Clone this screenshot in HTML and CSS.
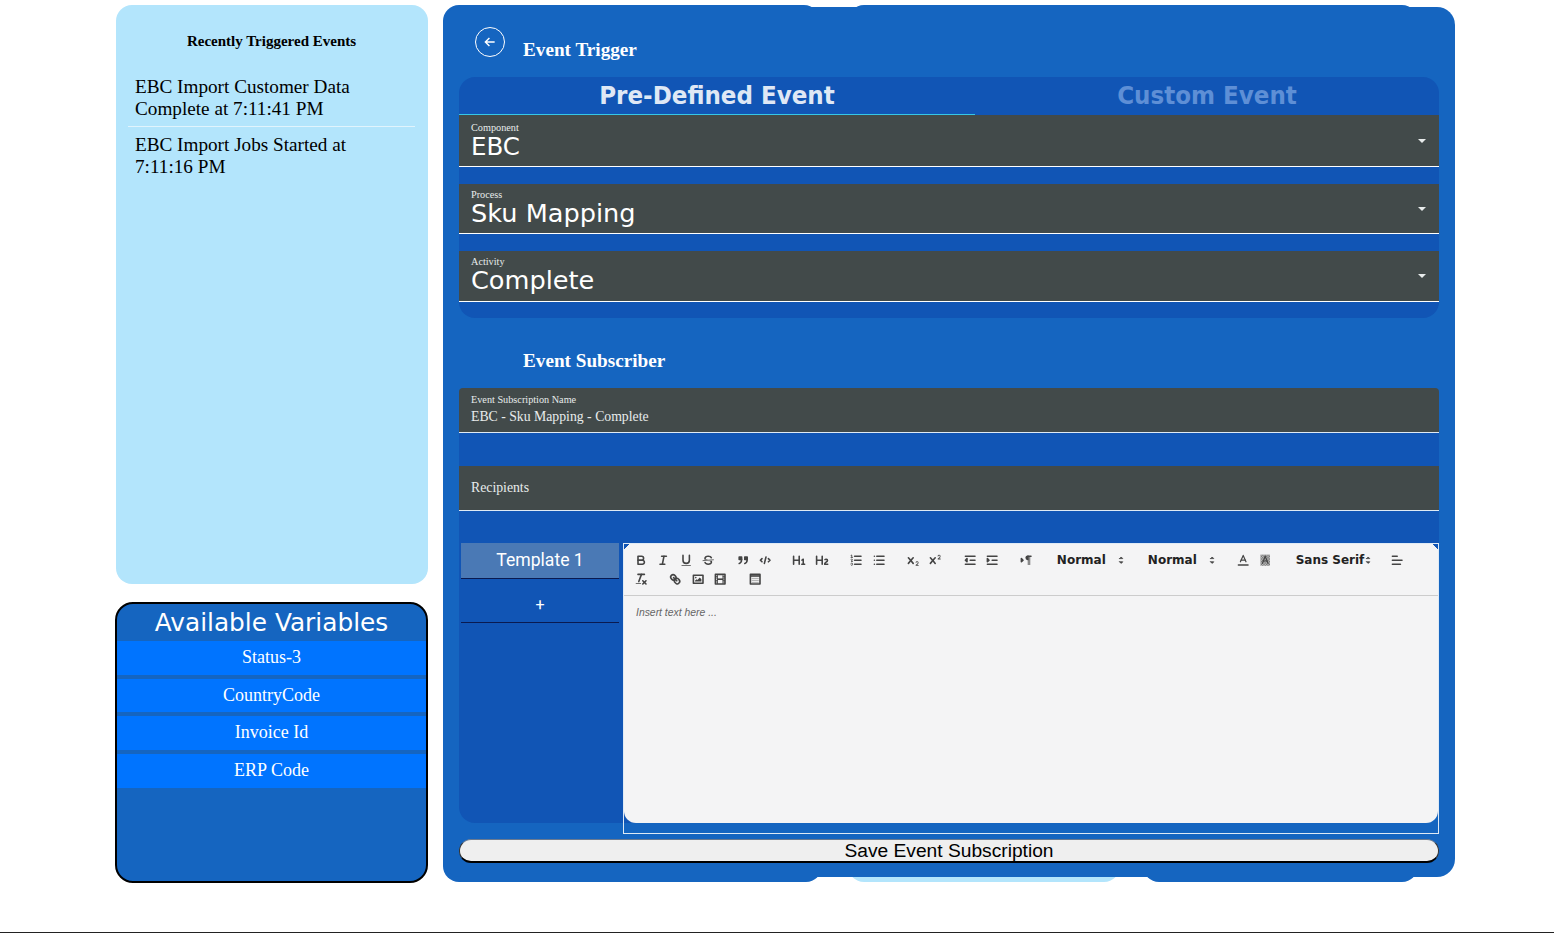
FILE: index.html
```html
<!DOCTYPE html>
<html lang="en">
<head>
    <meta charset="UTF-8">
    <meta name="viewport" content="width=device-width, initial-scale=1.0">
    <title>Event Subscription</title>
    <link rel="stylesheet" href="styles.css">
</head>
<body>
<div class="page">
    <div class="side">
        <div class="recent">
            <h4 class="recent-title">Recently Triggered Events</h4>
            <div class="recent-item">EBC Import Customer Data Complete at 7:11:41 PM</div>
            <div class="recent-item">EBC Import Jobs Started at 7:11:16 PM</div>
        </div>
        <div class="variables">
            <div class="variables-title">Available Variables</div>
            <div class="variable">Status-3</div>
            <div class="variable">CountryCode</div>
            <div class="variable">Invoice Id</div>
            <div class="variable">ERP Code</div>
        </div>
    </div>

    <div class="main">
        <!-- stacked panels that peek out behind the main one -->
        <div class="peek peek-top-left"></div>
        <div class="peek peek-top-right"></div>
        <div class="peek peek-bottom-left"></div>
        <div class="peek peek-bottom-mid"></div>
        <div class="peek peek-bottom-right"></div>

        <div class="trigger-head">
            <span class="back-btn">
                <svg viewBox="0 0 24 24" width="14" height="14"><path d="M20 12H5M11 5l-7 7 7 7" fill="none" stroke="#fff" stroke-width="2.4"/></svg>
            </span>
            <h3 class="heading">Event Trigger</h3>
        </div>

        <div class="band">
            <div class="tabs">
                <div class="tab active">Pre-Defined Event</div>
                <div class="tab">Custom Event</div>
            </div>
            <div class="select select-1">
                <div class="field-label">Component</div>
                <div class="select-value">EBC</div>
                <span class="caret"></span>
            </div>
            <div class="select select-2">
                <div class="field-label">Process</div>
                <div class="select-value">Sku Mapping</div>
                <span class="caret"></span>
            </div>
            <div class="select select-3">
                <div class="field-label">Activity</div>
                <div class="select-value">Complete</div>
                <span class="caret"></span>
            </div>
        </div>

        <h3 class="heading subscriber-heading">Event Subscriber</h3>

        <div class="band subscriber">
            <div class="text-field">
                <div class="field-label">Event Subscription Name</div>
                <div class="text-value">EBC - Sku Mapping - Complete</div>
            </div>
            <div class="text-field recipients">
                <div class="text-value">Recipients</div>
            </div>

            <div class="templates">
                <div class="template-tabs">
                    <div class="template-tab active">Template 1</div>
                    <div class="template-tab add">+</div>
                </div>
                <div class="editor-wrap">
                    <div class="editor">
                        <div class="toolbar">
                            <span class="group">
                                <span class="btn"><svg viewBox="0 0 18 18"><path class="st" d="M5,4H9.5A2.5,2.5,0,0,1,12,6.5v0A2.5,2.5,0,0,1,9.5,9H5A0,0,0,0,1,5,9V4A0,0,0,0,1,5,4Z"/><path class="st" d="M5,9h5.5A2.5,2.5,0,0,1,13,11.5v0A2.5,2.5,0,0,1,10.5,14H5a0,0,0,0,1,0,0V9A0,0,0,0,1,5,9Z"/></svg></span>
                                <span class="btn"><svg viewBox="0 0 18 18"><line class="st" x1="7" x2="13" y1="4" y2="4"/><line class="st" x1="5" x2="11" y1="14" y2="14"/><line class="st" x1="8" x2="10" y1="14" y2="4"/></svg></span>
                                <span class="btn"><svg viewBox="0 0 18 18"><path class="st" d="M5,3V9a4.012,4.012,0,0,0,4,4H9a4.012,4.012,0,0,0,4-4V3"/><rect class="fl" height="1" rx="0.5" ry="0.5" width="12" x="3" y="15"/></svg></span>
                                <span class="btn"><svg viewBox="0 0 18 18"><line class="st thin" x1="15.5" x2="2.5" y1="8.5" y2="9.5"/><path class="fl" d="M9.007,8C6.542,7.791,6,7.519,6,6.5,6,5.792,7.283,5,9,5c1.571,0,2.765.679,2.969,1.309a1,1,0,0,0,1.9-.617C13.356,4.106,11.354,3,9,3,6.2,3,4,4.538,4,6.5a3.2,3.2,0,0,0,.5,1.843Z"/><path class="fl" d="M8.984,10C11.457,10.208,12,10.48,12,11.5c0,.708-1.283,1.5-3,1.5-1.571,0-2.765-.679-2.969-1.309a1,1,0,1,0-1.9.617C4.644,13.894,6.646,15,9,15c2.8,0,5-1.538,5-3.5a3.2,3.2,0,0,0-.5-1.843Z"/></svg></span>
                            </span>
                            <span class="group">
                                <span class="btn"><svg viewBox="0 0 18 18"><rect class="fl st" height="3" width="3" x="4" y="5"/><rect class="fl st" height="3" width="3" x="11" y="5"/><path class="st" d="M7,8c0,4.031-3,5-3,5"/><path class="st" d="M14,8c0,4.031-3,5-3,5"/></svg></span>
                                <span class="btn"><svg viewBox="0 0 18 18"><polyline class="st" points="5 7 3 9 5 11"/><polyline class="st" points="13 7 15 9 13 11"/><line class="st" x1="10" x2="8" y1="5" y2="13"/></svg></span>
                            </span>
                            <span class="group">
                                <span class="btn"><svg viewBox="0 0 18 18"><path class="fl" d="M10,4V14a1,1,0,0,1-2,0V10H3v4a1,1,0,0,1-2,0V4A1,1,0,0,1,3,4V8H8V4a1,1,0,0,1,2,0Zm6.06787,9.209H14.98975V7.59863a.54085.54085,0,0,0-.605-.60547h-.62744a1.01119,1.01119,0,0,0-.748.29688L11.645,8.56641a.5435.5435,0,0,0-.022.8584l.28613.30762a.53861.53861,0,0,0,.84717.0332l.09912-.08789a1.2137,1.2137,0,0,0,.2417-.35254h.02246s-.01123.30859-.01123.60547V13.209H12.041a.54085.54085,0,0,0-.605.60547v.43945a.54085.54085,0,0,0,.605.60547h4.02686a.54085.54085,0,0,0,.605-.60547v-.43945A.54085.54085,0,0,0,16.06787,13.209Z"/></svg></span>
                                <span class="btn"><svg viewBox="0 0 18 18"><path class="fl" d="M16.73975,13.81445v.43945a.54085.54085,0,0,1-.605.60547H11.855a.58392.58392,0,0,1-.64893-.60547V14.0127c0-2.90527,3.39941-3.42187,3.39941-4.55469a.77675.77675,0,0,0-.84717-.78125,1.17684,1.17684,0,0,0-.83594.38477c-.2749.26367-.561.374-.85791.13184l-.4292-.34082c-.30811-.24219-.38525-.51758-.1543-.81445a2.97155,2.97155,0,0,1,2.45361-1.17676,2.45393,2.45393,0,0,1,2.68408,2.40918c0,2.45312-3.1792,2.92676-3.27832,3.93848h2.79443A.54085.54085,0,0,1,16.73975,13.81445ZM9,3A.99974.99974,0,0,0,8,4V8H3V4A1,1,0,0,0,1,4V14a1,1,0,0,0,2,0V10H8v4a1,1,0,0,0,2,0V4A.99974.99974,0,0,0,9,3Z"/></svg></span>
                            </span>
                            <span class="group">
                                <span class="btn"><svg viewBox="0 0 18 18"><line class="st" x1="7" x2="15" y1="4" y2="4"/><line class="st" x1="7" x2="15" y1="9" y2="9"/><line class="st" x1="7" x2="15" y1="14" y2="14"/><line class="st thin" x1="2.5" x2="4.5" y1="5.5" y2="5.5"/><path class="fl" d="M3.5,6A0.5,0.5,0,0,1,3,5.5V3.085l-0.276.138A0.5,0.5,0,0,1,2.053,3c-0.124-.247-0.023-0.324.224-0.447l1-.5A0.5,0.5,0,0,1,4,2.5v3A0.5,0.5,0,0,1,3.5,6Z"/><path class="st thin" d="M4.5,10.5h-2c0-.234,1.85-1.076,1.85-2.234A0.959,0.959,0,0,0,2.5,8.156"/><path class="st thin" d="M2.5,14.846a0.959,0.959,0,0,0,1.85-.109A0.7,0.7,0,0,0,3.75,14a0.688,0.688,0,0,0,.6-0.736,0.959,0.959,0,0,0-1.85-.109"/></svg></span>
                                <span class="btn"><svg viewBox="0 0 18 18"><line class="st" x1="6" x2="15" y1="4" y2="4"/><line class="st" x1="6" x2="15" y1="9" y2="9"/><line class="st" x1="6" x2="15" y1="14" y2="14"/><line class="st" x1="3" x2="3" y1="4" y2="4"/><line class="st" x1="3" x2="3" y1="9" y2="9"/><line class="st" x1="3" x2="3" y1="14" y2="14"/></svg></span>
                            </span>
                            <span class="group">
                                <span class="btn"><svg viewBox="0 0 18 18"><path class="fl" d="M15.5,15H13.861a3.858,3.858,0,0,0,1.914-2.975,1.8,1.8,0,0,0-1.6-1.751A1.921,1.921,0,0,0,12.021,11.7a0.50013,0.50013,0,1,0,.957.291h0a0.914,0.914,0,0,1,1.053-.725,0.81,0.81,0,0,1,.744.762c0,1.076-1.16971,1.86982-1.93971,2.43082A1.45639,1.45639,0,0,0,12,15.5a0.5,0.5,0,0,0,.5.5h3A0.5,0.5,0,0,0,15.5,15Z"/><path class="fl" d="M9.65,5.241a1,1,0,0,0-1.409.108L6,7.964,3.759,5.349A1,1,0,0,0,2.192,6.59178Q2.21541,6.6213,2.241,6.651L4.684,9.5,2.241,12.35A1,1,0,0,0,3.71,13.70722q0.02557-.02768.049-0.05722L6,11.036,8.241,13.65a1,1,0,1,0,1.567-1.24277Q9.78459,12.3777,9.759,12.35L7.316,9.5,9.759,6.651A1,1,0,0,0,9.65,5.241Z"/></svg></span>
                                <span class="btn"><svg viewBox="0 0 18 18"><path class="fl" d="M15.5,7H13.861a4.015,4.015,0,0,0,1.914-2.975,1.8,1.8,0,0,0-1.6-1.751A1.922,1.922,0,0,0,12.021,3.7a0.5,0.5,0,1,0,.957.291,0.917,0.917,0,0,1,1.053-.725,0.81,0.81,0,0,1,.744.762c0,1.077-1.164,1.925-1.934,2.486A1.423,1.423,0,0,0,12,7.5a0.5,0.5,0,0,0,.5.5h3A0.5,0.5,0,0,0,15.5,7Z"/><path class="fl" d="M9.651,5.241a1,1,0,0,0-1.41.108L6,7.964,3.759,5.349a1,1,0,1,0-1.519,1.3L4.683,9.5,2.241,12.35a1,1,0,1,0,1.519,1.3L6,11.036l2.241,2.616a1,1,0,0,0,1.519-1.3L7.317,9.5,9.759,6.651A1,1,0,0,0,9.651,5.241Z"/></svg></span>
                            </span>
                            <span class="group">
                                <span class="btn"><svg viewBox="0 0 18 18"><line class="st" x1="3" x2="15" y1="14" y2="14"/><line class="st" x1="3" x2="15" y1="4" y2="4"/><line class="st" x1="9" x2="15" y1="9" y2="9"/><polyline class="fl st" points="5 7 5 11 3 9 5 7"/></svg></span>
                                <span class="btn"><svg viewBox="0 0 18 18"><line class="st" x1="3" x2="15" y1="14" y2="14"/><line class="st" x1="3" x2="15" y1="4" y2="4"/><line class="st" x1="9" x2="15" y1="9" y2="9"/><polyline class="fl st" points="3 7 3 11 5 9 3 7"/></svg></span>
                            </span>
                            <span class="group">
                                <span class="btn"><svg viewBox="0 0 18 18"><polygon class="fl st" points="3 11 5 9 3 7 3 11"/><line class="st" x1="15" x2="11" y1="4" y2="4"/><path class="fl" d="M11,3a3,3,0,0,0,0,6h1V3H11Z"/><rect class="fl" height="11" width="1" x="11" y="4"/><rect class="fl" height="11" width="1" x="13" y="4"/></svg></span>
                            </span>
                            <span class="group">
                                <span class="picker">Normal<svg viewBox="0 0 18 18"><polygon class="st thin fl" points="7 11 9 13 11 11 7 11"/><polygon class="st thin fl" points="7 7 9 5 11 7 7 7"/></svg></span>
                            </span>
                            <span class="group">
                                <span class="picker">Normal<svg viewBox="0 0 18 18"><polygon class="st thin fl" points="7 11 9 13 11 11 7 11"/><polygon class="st thin fl" points="7 7 9 5 11 7 7 7"/></svg></span>
                            </span>
                            <span class="group">
                                <span class="btn"><svg viewBox="0 0 18 18"><line class="st" x1="3" x2="15" y1="15" y2="15"/><polyline class="st semi" points="5.5 11 9 3 12.5 11"/><line class="st semi" x1="11.63" x2="6.38" y1="9" y2="9"/></svg></span>
                                <span class="btn"><svg viewBox="0 0 18 18"><defs><pattern id="hatch" width="2" height="2" patternUnits="userSpaceOnUse"><rect width="2" height="2" fill="#ccc"/><rect width="1" height="1" fill="#666"/><rect x="1" y="1" width="1" height="1" fill="#666"/></pattern></defs><rect x="3" y="2" width="12" height="14" fill="url(#hatch)"/><polyline class="st semi" points="5.5 13 9 4 12.5 13"/><line class="st semi" x1="11.63" x2="6.38" y1="10" y2="10"/></svg></span>
                            </span>
                            <span class="group">
                                <span class="picker font">Sans Serif<svg viewBox="0 0 18 18"><polygon class="st thin fl" points="7 11 9 13 11 11 7 11"/><polygon class="st thin fl" points="7 7 9 5 11 7 7 7"/></svg></span>
                            </span>
                            <span class="group">
                                <span class="btn"><svg viewBox="0 0 18 18"><line class="st" x1="3" x2="15" y1="9" y2="9"/><line class="st" x1="3" x2="13" y1="14" y2="14"/><line class="st" x1="3" x2="9" y1="4" y2="4"/></svg></span>
                            </span>
                            <span class="group">
                                <span class="btn"><svg viewBox="0 0 18 18"><line class="st" x1="5" x2="13" y1="3" y2="3"/><line class="st" x1="6" x2="9.35" y1="12" y2="3"/><line class="st" x1="11" x2="15" y1="11" y2="15"/><line class="st" x1="15" x2="11" y1="11" y2="15"/><rect class="fl" height="1" rx="0.5" ry="0.5" width="7" x="2" y="14"/></svg></span>
                            </span>
                            <span class="group">
                                <span class="btn"><svg viewBox="0 0 18 18"><line class="st" x1="7" x2="11" y1="7" y2="11"/><path class="st" d="M8.9,4.577a3.476,3.476,0,0,1,.36,4.679A3.476,3.476,0,0,1,4.577,8.9C3.185,7.5,2.035,6.4,4.217,4.217S7.5,3.185,8.9,4.577Z"/><path class="st" d="M13.423,9.1a3.476,3.476,0,0,0-4.679-.36,3.476,3.476,0,0,0,.36,4.679c1.392,1.392,2.5,2.542,4.679.36S14.815,10.5,13.423,9.1Z"/></svg></span>
                                <span class="btn"><svg viewBox="0 0 18 18"><rect class="st" height="10" width="12" x="3" y="4"/><circle class="fl" cx="6" cy="7" r="1"/><polyline class="fl" points="5 12 5 11 7 9 8 10 11 7 13 9 13 12 5 12"/></svg></span>
                                <span class="btn"><svg viewBox="0 0 18 18"><rect class="st" height="12" width="12" x="3" y="3"/><rect class="fl" height="12" width="1" x="5" y="3"/><rect class="fl" height="12" width="1" x="12" y="3"/><rect class="fl" height="2" width="8" x="5" y="8"/><rect class="fl" height="1" width="3" x="3" y="5"/><rect class="fl" height="1" width="3" x="3" y="7"/><rect class="fl" height="1" width="3" x="3" y="10"/><rect class="fl" height="1" width="3" x="3" y="12"/><rect class="fl" height="1" width="3" x="12" y="5"/><rect class="fl" height="1" width="3" x="12" y="7"/><rect class="fl" height="1" width="3" x="12" y="10"/><rect class="fl" height="1" width="3" x="12" y="12"/></svg></span>
                            </span>
                            <span class="group">
                                <span class="btn"><svg viewBox="0 0 18 18"><rect class="st" height="12" width="12" x="3" y="3"/><rect class="fl" height="2" width="12" x="3" y="4"/><line class="st rows" x1="5" x2="13" y1="8" y2="8"/><line class="st rows" x1="5" x2="13" y1="10.5" y2="10.5"/><line class="st rows" x1="5" x2="13" y1="13" y2="13"/></svg></span>
                            </span>
                        </div>
                        <div class="editor-body">Insert text here ...</div>
                    </div>
                </div>
            </div>
        </div>

        <button class="save-btn">Save Event Subscription</button>
    </div>
</div>
</body>
</html>
```

FILE: styles.css
```css
body {
    margin: 0;
    padding: 0;
    background-color: #fff;
    font-family: "Liberation Serif", serif;
}
.page {
    box-sizing: border-box;
    height: 933px;
    padding: 5px 0 0 116px;
    display: flex;
    gap: 15px;
    overflow: hidden;
    border-bottom: 1px solid #222;
}

/* left column */
.side {
    width: 312px;
}
.recent {
    box-sizing: border-box;
    width: 312px;
    height: 579px;
    padding: 28px 13px 0 12px;
    background-color: #b3e5fc;
    border-radius: 16px;
}
.recent-title {
    margin: 0 0 26px;
    font-size: 15px;
    line-height: 17px;
    text-align: center;
}
.recent-item {
    padding: 0 20px 6px 7px;
    margin-bottom: 7px;
    font-size: 19.2px;
    line-height: 22px;
    border-bottom: 1px solid #e1f4fd;
}
.recent-item:last-child {
    border-bottom: none;
}
.variables {
    box-sizing: border-box;
    width: 313px;
    height: 281px;
    margin: 18px 0 0 -1px;
    background-color: #1565c0;
    border: 2px solid #000;
    border-radius: 18px;
    overflow: hidden;
}
.variables-title {
    height: 37px;
    color: #fff;
    font-family: "DejaVu Sans", sans-serif;
    font-size: 24.8px;
    line-height: 37px;
    text-align: center;
}
.variable {
    height: 33.67px;
    margin-bottom: 4px;
    background-color: #0074ff;
    color: #fff;
    font-size: 18px;
    line-height: 33px;
    text-align: center;
}

/* main panel */
.main {
    box-sizing: border-box;
    position: relative;
    width: 1012px;
    height: 870px;
    margin-top: 2px;
    padding: 0 16px;
    background-color: #1565c0;
    border-radius: 18px;
}
.peek {
    position: absolute;
    background-color: #1565c0;
    height: 40px;
    z-index: -1;
    border-radius: 16px;
}
.peek-top-left { left: 0; top: -2px; width: 377px; }
.peek-top-right { left: 405px; top: -2px; width: 570px; }
.peek-bottom-left { left: 0; bottom: -5px; width: 379px; }
.peek-bottom-mid { left: 405px; bottom: -5px; width: 272px; background-color: #b3e5fc; }
.peek-bottom-right { left: 700px; bottom: -5px; width: 275px; }

.trigger-head {
    height: 70px;
    display: flex;
    padding-left: 16px;
}
.back-btn {
    box-sizing: border-box;
    width: 30px;
    height: 30px;
    margin-top: 20px;
    display: flex;
    align-items: center;
    justify-content: center;
    border: 1px solid #fff;
    border-radius: 50%;
}
.heading {
    margin: 32px 0 0 18px;
    color: #fff;
    font-size: 19.2px;
    line-height: 21px;
    font-weight: bold;
}
.subscriber-heading {
    margin: 32px 0 17px 64px;
}
.band {
    background-color: #1155b5;
    border-radius: 16px;
    height: 241px;
}
.tabs {
    height: 38px;
    display: flex;
}
.tab {
    box-sizing: border-box;
    width: 516px;
    font-family: "DejaVu Sans Condensed", "DejaVu Sans", sans-serif;
    font-stretch: condensed;
    font-weight: bold;
    font-size: 25.6px;
    line-height: 37px;
    text-align: center;
    color: #5e8fd6;
}
.tab:last-child {
    width: 464px;
}
.tab.active {
    color: #dfe8f5;
    border-bottom: 1px solid #35c6e6;
}
.select {
    box-sizing: border-box;
    position: relative;
    height: 51px;
    margin-bottom: 17px;
    padding: 5px 12px 0;
    background-color: #424a4a;
    border-bottom: 1px solid #fff;
    color: #fff;
}
.select-1 { height: 52px; padding-top: 7px; }
.select-1 .select-value { font-size: 24.5px; line-height: 28px; }
.select-2 { height: 50px; }
.field-label {
    font-size: 10.24px;
    line-height: 11px;
    color: #e8ecec;
}
.select-value {
    font-family: "DejaVu Sans", sans-serif;
    font-size: 25.6px;
    line-height: 26px;
}
.caret {
    position: absolute;
    right: 13px;
    top: 50%;
    margin-top: -2px;
    border-left: 4px solid transparent;
    border-right: 4px solid transparent;
    border-top: 4px solid #e8ecec;
}

/* subscriber section */
.subscriber {
    height: 435px;
}
.text-field {
    box-sizing: border-box;
    height: 45px;
    padding: 6px 12px 0;
    margin-bottom: 33px;
    background-color: #424a4a;
    border-bottom: 1px solid #dfeaf5;
    border-radius: 4px 4px 0 0;
    color: #e8ecec;
}
.text-value {
    margin-top: 4px;
    font-size: 13.75px;
    line-height: 16px;
}
.recipients {
    border-radius: 0;
    padding-top: 10px;
    margin-bottom: 32px;
}
.templates {
    display: flex;
}
.template-tabs {
    box-sizing: border-box;
    width: 164px;
    padding: 0 4px 0 2px;
}
.template-tab {
    box-sizing: border-box;
    height: 36px;
    color: #fff;
    background-color: #4a79b5;
    border-bottom: 1px solid #0a1a50;
    font-family: Roboto, sans-serif;
    font-size: 17.6px;
    line-height: 34px;
    text-align: center;
}
.template-tab.add {
    height: 44px;
    background: none;
    font-size: 16px;
    line-height: 52px;
}
.editor-wrap {
    box-sizing: border-box;
    width: 816px;
    height: 291px;
    border: 1px solid #dfeaf5;
}
.editor {
    height: 279px;
    background-color: #f4f4f5;
    background-image:
        linear-gradient(135deg, #1155b5 4px, transparent 4px),
        linear-gradient(225deg, #1155b5 4px, transparent 4px);
    border-radius: 0 0 12px 12px;
    overflow: hidden;
}
.toolbar {
    box-sizing: border-box;
    height: 52px;
    padding: 7px 0 0 6px;
    display: flex;
    flex-wrap: wrap;
    align-content: flex-start;
    gap: 0 12px;
    border-bottom: 1px solid #ccc;
}
.group {
    display: flex;
    height: 19px;
    align-items: center;
}
.btn {
    width: 22.4px;
    display: flex;
    justify-content: center;
}
.btn svg {
    width: 14.4px;
    height: 14.4px;
}
.st {
    fill: none;
    stroke: #444;
    stroke-width: 2;
    stroke-linecap: round;
    stroke-linejoin: round;
}
.thin {
    stroke-width: 1;
}
.semi {
    stroke-width: 1.5;
}
.rows {
    stroke: #999;
    stroke-width: 1;
}
.fl {
    fill: #444;
}
.picker {
    box-sizing: border-box;
    width: 79px;
    padding-left: 7px;
    display: flex;
    align-items: center;
    justify-content: space-between;
    white-space: nowrap;
    font-family: "DejaVu Sans", sans-serif;
    font-size: 12px;
    font-weight: bold;
    color: #222;
}
.picker.font {
    width: 85px;
}
.picker svg {
    flex-shrink: 0;
    width: 14.4px;
    height: 14.4px;
}
.picker.font svg {
    margin-left: -3px;
}
.editor-body {
    padding: 11px 12px;
    font-family: "Liberation Sans", sans-serif;
    font-size: 10.4px;
    font-style: italic;
    color: #666;
}
.save-btn {
    display: block;
    width: 980px;
    height: 24px;
    margin-top: 16px;
    padding: 0;
    background-color: #efefef;
    color: #000;
    border: 1px solid #333;
    border-top-color: #6a7a90;
    border-bottom: 2px solid #000;
    border-radius: 12px;
    font-family: "Liberation Sans", sans-serif;
    font-size: 19.2px;
    line-height: 20px;
}
```
